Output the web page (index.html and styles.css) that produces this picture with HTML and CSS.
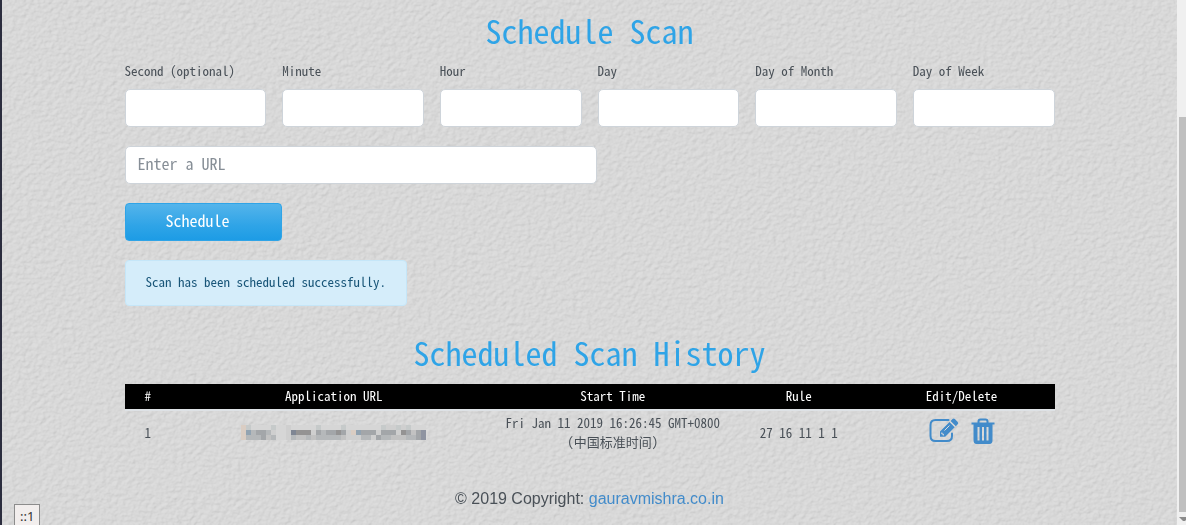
FILE: index.html
```html
<!DOCTYPE html>
<html lang="en">
<head>
<meta charset="utf-8">
<title>Schedule Scan</title>
<link rel="stylesheet" href="styles.css">
</head>
<body>
<svg class="wall" aria-hidden="true">
  <filter id="plaster" x="0" y="0" width="100%" height="100%" color-interpolation-filters="sRGB">
    <feTurbulence type="fractalNoise" baseFrequency="0.2 0.24" numOctaves="3" seed="21"/>
    <feColorMatrix values="0 0 0 0 0  0 0 0 0 0  0 0 0 0 0  1 0 0 0 0"/>
    <feDiffuseLighting surfaceScale="0.8" diffuseConstant="1.02" lighting-color="#e4e4e4">
      <feDistantLight azimuth="225" elevation="68"/>
    </feDiffuseLighting>
  </filter>
  <rect width="100%" height="100%" filter="url(#plaster)"/>
</svg>
<div class="frame">
  <div class="page">
    <main class="container">
      <h1 class="title">Schedule Scan</h1>
      <form class="form">
        <div class="fields">
          <div class="field"><label for="second">Second (optional)</label><input class="input" id="second" type="text"></div>
          <div class="field"><label for="minute">Minute</label><input class="input" id="minute" type="text"></div>
          <div class="field"><label for="hour">Hour</label><input class="input" id="hour" type="text"></div>
          <div class="field"><label for="day">Day</label><input class="input" id="day" type="text"></div>
          <div class="field"><label for="month">Day of Month</label><input class="input" id="month" type="text"></div>
          <div class="field"><label for="week">Day of Week</label><input class="input" id="week" type="text"></div>
        </div>
        <input class="input url" type="text" placeholder="Enter a URL" aria-label="URL">
        <button class="submit" type="button">Schedule</button>
        <div class="alert" role="status">Scan has been scheduled successfully.</div>
      </form>
      <h2 class="title history">Scheduled Scan History</h2>
      <table class="table">
        <colgroup><col class="c-num"><col class="c-url"><col class="c-time"><col class="c-rule"><col class="c-edit"></colgroup>
        <thead>
          <tr><th>#</th><th>Application URL</th><th>Start Time</th><th>Rule</th><th>Edit/Delete</th></tr>
        </thead>
        <tbody>
          <tr>
            <td>1</td>
            <td>
              <svg class="mosaic" viewBox="0 0 37 3" shape-rendering="crispEdges" aria-hidden="true">
                <rect width="37" height="3" fill="#cfcfcf"/>
                <path fill="#c6caca" d="M1 0h1v1h-1zM6 0h1v1h-1zM15 0h1v1h-1zM20 0h1v1h-1zM28 0h1v1h-1zM31 0h1v1h-1zM33 0h1v1h-1z"/>
                <path fill="#d6d6d6" d="M2 0h4v1h-4zM7 0h2v3h-2zM10 0h5v1h-5zM16 0h4v1h-4zM21 0h7v1h-7zM34 0h3v1h-3z"/>
                <path fill="#dacdc3" d="M0 0h1v3h-1zM22 1h1v1h-1z"/>
                <path fill="#92a3b1" d="M1 1h1v1h-1zM23 1h1v1h-1z"/>
                <path fill="#b5b8ba" d="M2 1h1v1h-1zM5 1h1v1h-1zM16 1h1v1h-1zM1 2h3v1h-3zM6 2h1v1h-1zM10 2h1v1h-1zM13 2h1v1h-1zM15 2h5v1h-5zM24 2h2v1h-2zM28 2h2v1h-2zM33 2h2v1h-2z"/>
                <path fill="#a3a6a9" d="M3 1h2v1h-2zM4 2h1v1h-1zM15 1h1v1h-1zM17 1h2v1h-2zM20 1h1v1h-1zM24 1h3v1h-3zM28 1h3v1h-3zM33 1h1v1h-1zM35 1h1v1h-1zM27 2h1v1h-1zM35 2h1v1h-1z"/>
                <path fill="#949393" d="M19 1h1v1h-1zM32 1h1v1h-1zM11 1h3v1h-3z"/>
                <path fill="#7f8693" d="M10 1h1v1h-1z"/>
                <path fill="#8f94a1" d="M36 1h1v2h-1z"/>
                <path fill="#c2c2c2" d="M5 2h1v1h-1zM11 2h2v1h-2zM14 2h1v1h-1zM20 2h1v1h-1zM30 2h3v1h-3zM34 1h1v1h-1z"/>
              </svg>
            </td>
            <td>Fri Jan 11 2019 16:26:45 GMT+0800<br>(中国标准时间)</td>
            <td>27 16 11 1 1</td>
            <td>
              <div class="actions">
                <button class="icon" type="button" aria-label="Edit">
                  <svg width="30" height="25" viewBox="0 0 30 25">
                    <path fill="none" stroke="currentColor" stroke-width="2" stroke-linecap="round" d="M19.500 2H6.500C3.500 2 1.500 4 1.500 7v11c0 3 2 5 5 5h11.500c3 0 5-2 5-5v-2.500"/>
                    <path fill="currentColor" d="M11 13.500 20.500 4 25.700 9.200 16.200 18.700H11zM21.600 3 23.500 1.100q1.200-1.100 2.400 0l2.800 2.800q1.100 1.200 0 2.400L26.800 8.200z"/>
                    <path fill="none" stroke="#dcdcdc" d="M15.500 12.500 20.500 7.500M12.800 14.500v1.500h1.500v1.500"/>
                  </svg>
                </button>
                <button class="icon" type="button" aria-label="Delete">
                  <svg width="24" height="26" viewBox="0 0 24 26">
                    <path fill="none" stroke="currentColor" stroke-width="2" d="M7.500 5V3.500q0-2 2-2h5q2 0 2 2V5"/>
                    <path fill="currentColor" fill-rule="evenodd" d="M.5 4.500h23v2h-2V22q0 4-3 4h-13q-3 0-3-4V6.500h-2zM6.500 9v13.500h2V9zM11 9v13.500h2V9zM15.500 9v13.500h2V9z"/>
                  </svg>
                </button>
              </div>
            </td>
          </tr>
        </tbody>
      </table>
    </main>
    <footer class="footer">© 2019 Copyright: <a href="#">gauravmishra.co.in</a></footer>
  </div>
  <div class="scrollbar" aria-hidden="true">
    <div class="thumb"></div>
    <svg class="arrow" width="7" height="4" viewBox="0 0 7 4"><path fill="#8a8a8a" d="M0 0h7v3L6 4H4z"/></svg>
  </div>
</div>
<div class="status">::1</div>
</body>
</html>
```
FILE: styles.css
```css
* { box-sizing: border-box; }
body {
  margin: 0;
  color: #495057;
  background: #d9d9d9;
  font: 13px/19px "Noto Sans Mono CJK SC", "Liberation Mono", monospace;
}
.wall { position: fixed; inset: 0; width: 100%; height: 100%; z-index: -1; opacity: .4; }
.frame { display: flex; min-height: 100vh; border-left: 2px solid #2b2d3e; }
.page { flex: 1; padding: 10px 16px 0; }
.container { max-width: 930px; margin: 0 auto; }
.title { margin: 0 0 11px; color: #2fa4e7; font-size: 32px; line-height: 40px; font-weight: 400; text-align: center; }
.form { display: flex; flex-direction: column; align-items: flex-start; gap: 19px; }
.fields { display: grid; grid-template-columns: repeat(6, 1fr); gap: 16px; width: 100%; }
.field { display: flex; flex-direction: column; gap: 9px; }
.input {
  width: 100%;
  height: 38px;
  padding: 0 12px 4px;
  border: 1px solid #ced4da;
  border-radius: 5px;
  background: #fff;
  color: #495057;
  font: inherit;
  font-size: 16px;
}
.input::placeholder { color: #868e96; }
.url { width: calc(50% + 7px); }
.submit {
  width: 157px;
  height: 38px;
  padding: 0 12px 4px 40px;
  border: 1px solid #2fa4e7;
  border-radius: 4px;
  color: #fff;
  background: linear-gradient(#54b4eb, #2fa4e7 60%, #1d9ce5);
  font: inherit;
  font-size: 16px;
  text-align: left;
}
.alert {
  padding: 11px 20px 14px;
  border: 1px solid #c5e6f8;
  border-radius: 4px;
  background: #d5edfa;
  color: #185578;
}
.history { margin-top: 26px; margin-bottom: 12px; }
.table { width: 100%; border-collapse: collapse; table-layout: fixed; text-align: center; }
.c-num { width: 5%; }
.c-url { width: 35%; }
.c-time { width: 25%; }
.c-rule { width: 15%; }
.c-edit { width: 20%; }
.table th { padding: 2px 0 4px; background: #000; color: #fff; font-weight: 400; }
.table td { padding: 2px 0 7px; }
.table tbody td { border-top: 2px solid #dee2e6; }
.mosaic { display: block; width: 185px; height: 15px; margin: 0 auto; }
.actions { display: flex; justify-content: center; gap: 12px; padding-bottom: 3px; }
.icon { display: flex; padding: 0; border: 0; background: none; color: #428bca; }
.footer { padding: 29px 0 12px; font: 16px/24px "Liberation Sans", sans-serif; text-align: center; }
.footer a { color: #428bca; text-decoration: none; }
.scrollbar {
  display: flex;
  flex-direction: column;
  align-items: flex-end;
  width: 9px;
  padding-top: 117px;
  background: #f0f0f0;
}
.thumb { flex: 1; width: 7px; background: #bfbfbf; }
.arrow { display: block; margin: 5px 0 4px; }
.status {
  position: fixed;
  left: 14px;
  bottom: 0;
  padding: 2px 5px 0;
  border: 1px solid #8c8c8c;
  border-bottom: 0;
  background: #f2eeed;
  color: #333;
  font: 13px/18px "Noto Sans", sans-serif;
}
```
